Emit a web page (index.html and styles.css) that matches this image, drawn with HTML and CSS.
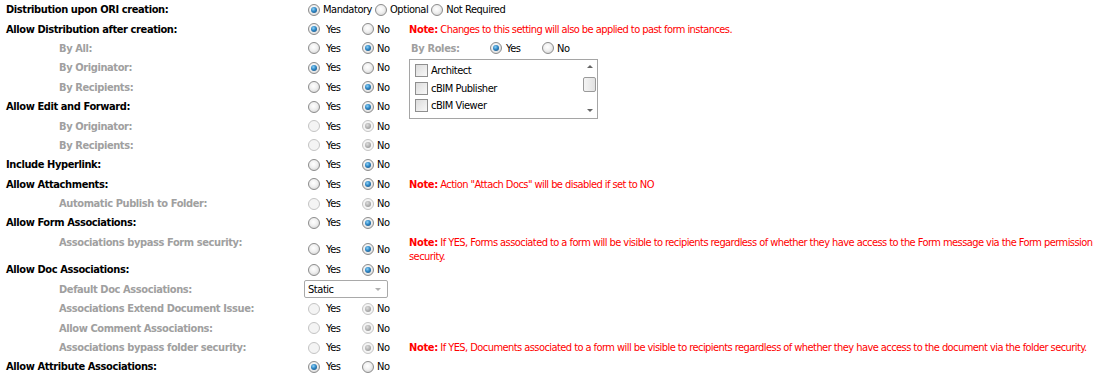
FILE: index.html
```html
<!DOCTYPE html>
<html>
<head>
<meta charset="utf-8">
<title>Form settings</title>
<link rel="stylesheet" href="styles.css">
</head>
<body>
<div class="form">
  <div class="lbl">Distribution upon ORI creation:</div>
  <div class="ctl three">
    <span class="opt"><span class="rb on"></span><span class="t">Mandatory</span></span>
    <span class="opt"><span class="rb"></span><span class="t">Optional</span></span>
    <span class="opt"><span class="rb"></span><span class="t">Not Required</span></span>
  </div>
  <div class="note"></div>

  <div class="lbl">Allow Distribution after creation:</div>
  <div class="ctl"><span class="opt"><span class="rb on"></span><span class="t">Yes</span></span><span class="opt"><span class="rb"></span><span class="t">No</span></span></div>
  <div class="note"><span><b>Note:</b> Changes to this setting will also be applied to past form instances.</span></div>

  <div class="lbl sub">By All:</div>
  <div class="ctl"><span class="opt"><span class="rb"></span><span class="t">Yes</span></span><span class="opt"><span class="rb on"></span><span class="t">No</span></span></div>
  <div class="note roles-line">
    <span class="roles-lbl">By Roles:</span>
    <span class="opt"><span class="rb on"></span><span class="t">Yes</span></span><span class="opt"><span class="rb"></span><span class="t">No</span></span>
  </div>

  <div class="lbl sub">By Originator:</div>
  <div class="ctl"><span class="opt"><span class="rb on"></span><span class="t">Yes</span></span><span class="opt"><span class="rb"></span><span class="t">No</span></span></div>
  <div class="roles">
    <div class="roles-list">
      <div class="item"><span class="cb"></span>Architect</div>
      <div class="item"><span class="cb"></span>cBIM Publisher</div>
      <div class="item"><span class="cb"></span>cBIM Viewer</div>
    </div>
    <div class="sbar">
      <span class="arr up"></span>
      <span class="thumb"></span>
      <span class="arr down"></span>
    </div>
  </div>

  <div class="lbl sub">By Recipients:</div>
  <div class="ctl"><span class="opt"><span class="rb"></span><span class="t">Yes</span></span><span class="opt"><span class="rb on"></span><span class="t">No</span></span></div>

  <div class="lbl">Allow Edit and Forward:</div>
  <div class="ctl"><span class="opt"><span class="rb"></span><span class="t">Yes</span></span><span class="opt"><span class="rb on"></span><span class="t">No</span></span></div>

  <div class="lbl sub">By Originator:</div>
  <div class="ctl dis"><span class="opt"><span class="rb"></span><span class="t">Yes</span></span><span class="opt"><span class="rb on"></span><span class="t">No</span></span></div>
  <div class="note"></div>

  <div class="lbl sub">By Recipients:</div>
  <div class="ctl dis"><span class="opt"><span class="rb"></span><span class="t">Yes</span></span><span class="opt"><span class="rb on"></span><span class="t">No</span></span></div>
  <div class="note"></div>

  <div class="lbl">Include Hyperlink:</div>
  <div class="ctl"><span class="opt"><span class="rb"></span><span class="t">Yes</span></span><span class="opt"><span class="rb on"></span><span class="t">No</span></span></div>
  <div class="note"></div>

  <div class="lbl">Allow Attachments:</div>
  <div class="ctl"><span class="opt"><span class="rb"></span><span class="t">Yes</span></span><span class="opt"><span class="rb on"></span><span class="t">No</span></span></div>
  <div class="note"><span><b>Note:</b> Action "Attach Docs" will be disabled if set to NO</span></div>

  <div class="lbl sub">Automatic Publish to Folder:</div>
  <div class="ctl dis"><span class="opt"><span class="rb"></span><span class="t">Yes</span></span><span class="opt"><span class="rb on"></span><span class="t">No</span></span></div>
  <div class="note"></div>

  <div class="lbl">Allow Form Associations:</div>
  <div class="ctl"><span class="opt"><span class="rb"></span><span class="t">Yes</span></span><span class="opt"><span class="rb on"></span><span class="t">No</span></span></div>
  <div class="note"></div>

  <div class="lbl sub top">Associations bypass Form security:</div>
  <div class="ctl low"><span class="opt"><span class="rb"></span><span class="t">Yes</span></span><span class="opt"><span class="rb on"></span><span class="t">No</span></span></div>
  <div class="note top"><span><b>Note:</b> If YES, Forms associated to a form will be visible to recipients regardless of whether they have access to the Form message via the Form permission security.</span></div>

  <div class="lbl">Allow Doc Associations:</div>
  <div class="ctl"><span class="opt"><span class="rb"></span><span class="t">Yes</span></span><span class="opt"><span class="rb on"></span><span class="t">No</span></span></div>
  <div class="note"></div>

  <div class="lbl sub">Default Doc Associations:</div>
  <div class="ctl"><span class="select">Static<span class="caret"></span></span></div>
  <div class="note"></div>

  <div class="lbl sub">Associations Extend Document Issue:</div>
  <div class="ctl dis"><span class="opt"><span class="rb"></span><span class="t">Yes</span></span><span class="opt"><span class="rb on"></span><span class="t">No</span></span></div>
  <div class="note"></div>

  <div class="lbl sub">Allow Comment Associations:</div>
  <div class="ctl dis"><span class="opt"><span class="rb"></span><span class="t">Yes</span></span><span class="opt"><span class="rb on"></span><span class="t">No</span></span></div>
  <div class="note"></div>

  <div class="lbl sub">Associations bypass folder security:</div>
  <div class="ctl dis"><span class="opt"><span class="rb"></span><span class="t">Yes</span></span><span class="opt"><span class="rb on"></span><span class="t">No</span></span></div>
  <div class="note single"><span><b>Note:</b> If YES, Documents associated to a form will be visible to recipients regardless of whether they have access to the document via the folder security.</span></div>

  <div class="lbl">Allow Attribute Associations:</div>
  <div class="ctl"><span class="opt"><span class="rb on"></span><span class="t">Yes</span></span><span class="opt"><span class="rb"></span><span class="t">No</span></span></div>
  <div class="note"></div>
</div>
</body>
</html>
```
FILE: styles.css
```css
html, body {
  margin: 0;
  background: #fff;
}
body {
  font-family: "DejaVu Sans Condensed", "DejaVu Sans", sans-serif;
  font-size: 11px;
  letter-spacing: -0.45px;
  color: #000;
}
.form {
  display: grid;
  grid-template-columns: 298px 100px 1fr;
  grid-template-rows: repeat(12, 19.4px) 27.6px repeat(6, 19.4px);
  padding: 0 0 0 6px;
}
.lbl {
  grid-column: 1;
  display: flex;
  align-items: center;
  font-weight: bold;
  letter-spacing: -0.4px;
  white-space: nowrap;
}
.lbl.sub {
  padding-left: 53px;
  color: #a0a0a0;
}
.lbl.top, .note.top {
  align-items: flex-start;
  padding-top: 3px;
  line-height: 14px;
}
.ctl {
  grid-column: 2;
  display: flex;
  align-items: center;
  padding-left: 4px;
  white-space: nowrap;
}
.ctl.low {
  padding-top: 6px;
}
.note {
  grid-column: 3;
  display: flex;
  align-items: center;
  padding-left: 5px;
  color: #ff0000;
  letter-spacing: -0.56px;
}
.note.single {
  white-space: nowrap;
}
.note b {
  font-weight: bold;
  letter-spacing: -0.35px;
}
.opt {
  display: inline-flex;
  align-items: center;
}
.ctl .opt:first-child {
  width: 54px;
}
.opt .t {
  margin-left: 6px;
}
.ctl .opt:last-child .t {
  margin-left: 3px;
}
.ctl.three .opt {
  width: auto;
  margin-right: 3px;
}
.ctl.three .opt .t {
  margin-left: 3px;
}
.rb {
  position: relative;
  flex: none;
  width: 12px;
  height: 12px;
  box-sizing: border-box;
  border-radius: 50%;
  border: 1px solid #8c8c8c;
  background: radial-gradient(circle at 45% 40%, #ffffff 0%, #f0f0f0 45%, #c9c9c9 100%);
}
.rb.on::after {
  content: "";
  position: absolute;
  left: 2px;
  top: 2px;
  width: 6px;
  height: 6px;
  border-radius: 50%;
  background: radial-gradient(circle at 40% 35%, #8fd3f7 0%, #2f86c4 45%, #16466f 100%);
}
.ctl.dis .rb {
  border-color: #c4c4c4;
  background: #f4f4f4;
}
.ctl.dis .rb.on::after {
  background: radial-gradient(circle at 40% 35%, #dedede 0%, #a8a8a8 60%, #8e8e8e 100%);
}
.roles-line {
  color: #000;
  letter-spacing: -0.45px;
}
.roles-lbl {
  font-weight: bold;
  letter-spacing: -0.35px;
  color: #a0a0a0;
  width: 79px;
  margin-left: 2px;
}
.roles-line .opt:nth-of-type(2) {
  width: 52px;
}
.roles-line .opt .t {
  margin-left: 4px;
}
.roles-line .opt:last-child .t {
  margin-left: 3px;
}
.roles {
  grid-column: 3;
  grid-row: 4 / span 3;
  align-self: start;
  margin: 1px 0 -4px 5px;
  width: 189px;
  height: 60px;
  box-sizing: border-box;
  border: 1px solid #a5a5a5;
  display: flex;
  background: #fff;
}
.roles-list {
  flex: 1;
  padding: 2px 0 0 5px;
}
.item {
  height: 17.5px;
  display: flex;
  align-items: center;
}
.cb {
  width: 13px;
  height: 13px;
  box-sizing: border-box;
  border: 1px solid #8f8f8f;
  background: linear-gradient(135deg, #dcdcdc, #f8f8f8);
  margin-right: 3px;
}
.sbar {
  width: 15px;
  display: flex;
  flex-direction: column;
  align-items: center;
  justify-content: space-between;
  padding: 5px 0 6px;
  box-sizing: border-box;
  position: relative;
}
.arr {
  width: 0;
  height: 0;
  border-left: 3px solid transparent;
  border-right: 3px solid transparent;
}
.arr.up {
  border-bottom: 3px solid #666;
}
.arr.down {
  border-top: 3px solid #666;
}
.thumb {
  position: absolute;
  left: 1px;
  top: 17px;
  width: 13px;
  height: 15px;
  box-sizing: border-box;
  border: 1px solid #9a9a9a;
  border-radius: 2px;
  background: linear-gradient(90deg, #f4f4f4, #e2e2e2);
}
.select {
  position: relative;
  display: flex;
  align-items: center;
  width: 84px;
  height: 18px;
  box-sizing: border-box;
  border: 1px solid #a9a9a9;
  border-radius: 2px;
  padding-left: 3px;
  margin-left: -4px;
  background: #fff;
}
.caret {
  position: absolute;
  right: 6px;
  top: 7px;
  width: 0;
  height: 0;
  border-left: 3px solid transparent;
  border-right: 3px solid transparent;
  border-top: 3px solid #b0b0b0;
}
```
